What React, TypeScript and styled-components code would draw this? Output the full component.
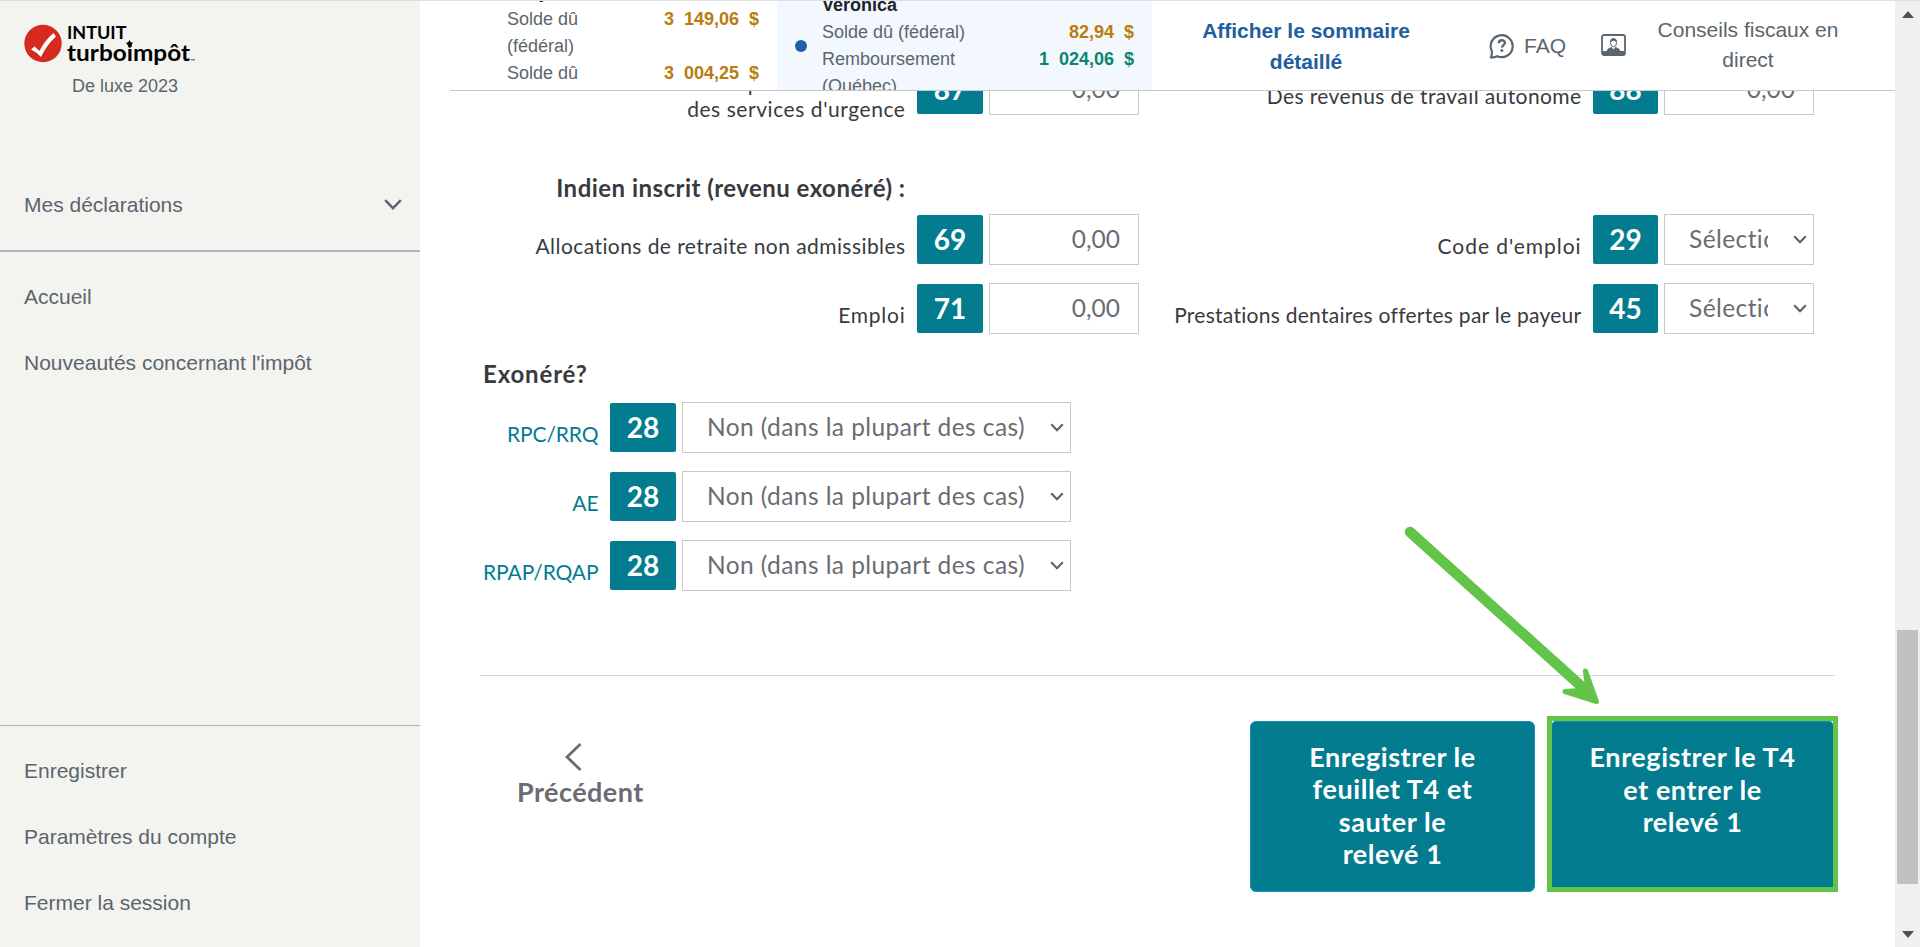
import styled, { createGlobalStyle } from "styled-components";

const avenir = `Lato, "Liberation Sans", sans-serif`;
const arial = `"Liberation Sans", Arial, sans-serif`;

const App = () => {
  return (
    <Page>
      <GlobalStyle />
      <Sidebar>
        <Brand>
          <Logo />
          <Edition>De luxe 2023</Edition>
        </Brand>
        <ReturnsToggle>
          <span>Mes déclarations</span>
          <Chevron width={18} height={11} stroke={2.4} />
        </ReturnsToggle>
        <NavList>
          <NavItem>Accueil</NavItem>
          <NavItem>Nouveautés concernant l'impôt</NavItem>
        </NavList>
        <BottomNav>
          <NavItem>Enregistrer</NavItem>
          <NavItem>Paramètres du compte</NavItem>
          <NavItem>Fermer la session</NavItem>
        </BottomNav>
      </Sidebar>
      <Main>
        <Header>
          <PersonCard>
            <PersonInfo>
              <PersonName>Tony</PersonName>
              <span>Solde dû</span>
              <span>(fédéral)</span>
              <span>Solde dû</span>
            </PersonInfo>
            <Amounts>
              <Amount>{"3\u00a0\u00a0149,06\u00a0\u00a0$"}</Amount>
              <Amount />
              <Amount>{"3\u00a0\u00a0004,25\u00a0\u00a0$"}</Amount>
            </Amounts>
          </PersonCard>
          <ActivePersonCard>
            <Dot />
            <PersonInfo>
              <PersonName>Veronica</PersonName>
              <span>Solde dû (fédéral)</span>
              <span>Remboursement</span>
              <span>(Québec)</span>
            </PersonInfo>
            <Amounts>
              <Amount>{"82,94\u00a0\u00a0$"}</Amount>
              <Amount $refund>{"1\u00a0\u00a0024,06\u00a0\u00a0$"}</Amount>
            </Amounts>
          </ActivePersonCard>
          <SummaryLink>Afficher le sommaire détaillé</SummaryLink>
          <FaqLink>
            <FaqIcon />
            <span>FAQ</span>
          </FaqLink>
          <ExpertLink>
            <ExpertIcon />
            <span>Conseils fiscaux en direct</span>
          </ExpertLink>
        </Header>
        <Content>
          <FormGrid>
            <Field label={"Somme pour volontaires\ndes services d'urgence"} box="87" spacing={0.56} />
            <Field label="Des revenus de travail autonome" box="88" spacing={0.4} />
          </FormGrid>
          <SectionTitle>Indien inscrit (revenu exonéré) :</SectionTitle>
          <FormGrid>
            <Field label="Allocations de retraite non admissibles" box="69" spacing={0.43} />
            <Field label="Code d'emploi" box="29" select spacing={0.95} />
            <Field label="Emploi" box="71" spacing={0.75} />
            <Field label="Prestations dentaires offertes par le payeur" box="45" select spacing={0.27} />
          </FormGrid>
          <ExemptTitle>Exonéré?</ExemptTitle>
          <ExemptList>
            {["RPC/RRQ", "AE", "RPAP/RQAP"].map((label) => (
              <FieldRow key={label}>
                <LinkLabel $spacing={-0.1}>{label}</LinkLabel>
                <BoxNumber>28</BoxNumber>
                <SelectBox $width={389}>
                  <SelectText>Non (dans la plupart des cas)</SelectText>
                  <Chevron width={14} height={9} stroke={2.2} />
                </SelectBox>
              </FieldRow>
            ))}
          </ExemptList>
          <Actions>
            <BackButton>
              <BackIcon />
              Précédent
            </BackButton>
            <ActionButtons>
              <SaveButton>
                Enregistrer le
                <br />
                feuillet T4 et
                <br />
                sauter le
                <br />
                relevé 1
              </SaveButton>
              <Highlight>
                <SaveButton>
                  Enregistrer le T4
                  <br />
                  et entrer le
                  <br />
                  relevé 1
                </SaveButton>
              </Highlight>
            </ActionButtons>
          </Actions>
        </Content>
      </Main>
      <ScrollTrack>
        <ScrollArrow viewBox="0 0 12 7">
          <path d="M6 0 12 7H0Z" fill="#505050" />
        </ScrollArrow>
        <ScrollThumb />
        <ScrollArrow viewBox="0 0 12 7">
          <path d="M0 0H12L6 7Z" fill="#505050" />
        </ScrollArrow>
      </ScrollTrack>
      <PointerArrow viewBox="0 0 200 190">
        <path d="M9 10 180 164" stroke="#62c448" strokeWidth="10.500" strokeLinecap="round" />
        <path
          d="M184.500 149 195.500 179.500 164 169.500 178 168.500 186 162Z"
          fill="#62c448"
          stroke="#62c448"
          strokeWidth="5"
          strokeLinejoin="round"
        />
      </PointerArrow>
    </Page>
  );
};

export default App;

type FieldProps = {
  label: string;
  box: string;
  select?: boolean;
  spacing: number;
};

const Field = ({ label, box, select, spacing }: FieldProps) => (
  <FieldRow>
    <Label $spacing={spacing}>{label}</Label>
    <BoxNumber>{box}</BoxNumber>
    {select ? (
      <SelectBox $width={150}>
        <SelectText $clip>Sélectionnez</SelectText>
        <Chevron width={14} height={9} stroke={2.2} />
      </SelectBox>
    ) : (
      <AmountInput defaultValue="0,00" />
    )}
  </FieldRow>
);

const Chevron = ({ width, height, stroke }: { width: number; height: number; stroke: number }) => (
  <svg width={width} height={height} viewBox={`0 0 ${width} ${height}`} fill="none">
    <path
      d={`M1.200 1.200 ${width / 2} ${height - 1.8} ${width - 1.2} 1.200`}
      stroke="#5b656d"
      strokeWidth={stroke}
    />
  </svg>
);

const BackIcon = () => (
  <svg width="17" height="28" viewBox="0 0 17 28" fill="none">
    <path d="M15.500 1 2 14 15.500 27" stroke="#6b6c72" strokeWidth="2.800" />
  </svg>
);

const FaqIcon = () => (
  <svg width="26" height="26" viewBox="0 0 26 26" fill="none" stroke="#5b656d">
    <path
      d="M1.800 24.400Q3.200 22.500 2.800 18A11 11 0 1 1 8.200 23.200Q5 24.800 1.800 24.400Z"
      strokeWidth="2.200"
      strokeLinejoin="round"
    />
    <path d="M9.800 10.200C9.800 6.200 16.200 6.400 15.900 9.900 15.700 12 13 12.200 12.900 14.600" strokeWidth="2.300" />
    <circle cx="12.900" cy="17.600" r="1.500" fill="#5b656d" stroke="none" />
  </svg>
);

const ExpertIcon = () => (
  <svg width="25" height="22" viewBox="0 0 25 22" fill="none">
    <rect x="1" y="1" width="23" height="20" rx="2" stroke="#5b656d" strokeWidth="1.800" />
    <path d="M2 17H5.500Q6.500 14 10.500 13L12.500 15.500 14.500 13Q18.500 14 19.500 17H23V20.500H2Z" fill="#5b656d" />
    <ellipse cx="12.500" cy="8.800" rx="3" ry="4" fill="#fff" stroke="#5b656d" strokeWidth="1" />
    <path d="M9.200 8Q9 4.300 12.500 4.300T15.800 8Q13.500 7.600 12.500 6.600 11 7.800 9.200 8Z" fill="#5b656d" />
  </svg>
);

const Logo = () => (
  <svg width="176" height="44" viewBox="0 0 176 44">
    <circle cx="19" cy="19.500" r="18.700" fill="#d52b1e" />
    <path d="M7 25.500 10.500 22.500 15.500 27Q20.500 16.500 29.500 9L32 12.500Q22.500 21 17 33Q12.500 28 7 25.500Z" fill="#fff" />
    <LogoText x="43" y="14.800" fontSize="16.500" textLength="59.500" lengthAdjust="spacingAndGlyphs">
      INTUIT
    </LogoText>
    <LogoText x="43" y="37.200" fontSize="23" textLength="123" lengthAdjust="spacingAndGlyphs">
      turboimpôt
    </LogoText>
    <path d="M105.500 16 107 18.500H109L107.500 21H106.200V23.500H104.800V21H103.500L102 18.500H104Z" fill="#000" />
    <path d="M167 35.800H171" stroke="#555" strokeWidth="1" />
  </svg>
);

const GlobalStyle = createGlobalStyle`
  * {
    box-sizing: border-box;
  }
  body {
    margin: 0;
    background: #fff;
    overflow: hidden;
  }
`;

const Page = styled.div`
  position: relative;
  display: grid;
  grid-template-columns: 420px 1fr 25px;
  width: 1920px;
  height: 947px;
  border-top: 1px solid #dedfe0;
  overflow: hidden;
  font-family: ${arial};
`;

const Sidebar = styled.aside`
  display: flex;
  flex-direction: column;
  background: #f3f4ef;
  color: #5b656d;
  font-size: 21px;
`;

const Brand = styled.div`
  display: flex;
  flex-direction: column;
  height: 158px;
  padding: 23px 0 0 24px;
`;

const LogoText = styled.text`
  font-family: ${avenir};
  font-weight: 700;
`;

const Edition = styled.div`
  padding: 7px 0 0 48px;
  font-size: 18px;
  line-height: 22px;
`;

const ReturnsToggle = styled.div`
  display: flex;
  align-items: center;
  justify-content: space-between;
  height: 93px;
  padding: 0 18px 0 24px;
  border-bottom: 2px solid #a9b7bf;
`;

const NavList = styled.nav`
  display: flex;
  flex-direction: column;
  gap: 42px;
  padding: 33px 24px 0;
`;

const NavItem = styled.a`
  line-height: 24px;
`;

const BottomNav = styled(NavList)`
  height: 222px;
  margin-top: auto;
  border-top: 1px solid #a9b7bf;
`;

const Main = styled.main`
  display: flex;
  flex-direction: column;
  min-width: 0;
  overflow: hidden;
`;

const Header = styled.header`
  display: flex;
  flex: none;
  height: 90px;
  margin-left: 30px;
  border-bottom: 1px solid #c1c9cc;
  background: #fff;
  color: #5b656d;
  font-size: 21px;
  line-height: 30px;
  overflow: hidden;
`;

const PersonCard = styled.div`
  display: flex;
  justify-content: space-between;
  flex: none;
  width: 327px;
  padding: 0 18px 0 57px;
  font-size: 18px;
  line-height: 27px;
`;

const ActivePersonCard = styled(PersonCard)`
  width: 375px;
  padding: 13px 18px 0 18px;
  background: #f3f8fe;
`;

const PersonInfo = styled.div`
  display: flex;
  flex-direction: column;
  flex: 1;
  margin-top: -22px;
  white-space: nowrap;

  ${ActivePersonCard} & {
    margin-left: 15px;
  }
`;

const PersonName = styled.strong`
  color: #1d232b;
`;

const Dot = styled.div`
  width: 12px;
  height: 12px;
  margin-top: 26px;
  border-radius: 50%;
  background: #205ea6;
`;

const Amounts = styled.div`
  display: flex;
  flex-direction: column;
  align-items: flex-end;
  margin-top: 5px;
`;

const Amount = styled.strong<{ $refund?: boolean }>`
  height: 27px;
  color: ${({ $refund }) => ($refund ? "#0b8570" : "#ba7c0c")};
`;

const SummaryLink = styled.a`
  width: 220px;
  margin: 14px 0 0 44px;
  color: #205ea0;
  font-weight: bold;
  line-height: 31px;
  text-align: center;
`;

const FaqLink = styled.a`
  display: flex;
  align-items: center;
  gap: 9px;
  margin-left: 73px;
`;

const ExpertLink = styled.a`
  display: flex;
  align-items: center;
  margin-left: 35px;
  padding-bottom: 1px;

  span {
    width: 200px;
    margin-left: 22px;
    text-align: center;
  }
`;

const Content = styled.section`
  display: flex;
  flex-direction: column;
  flex: 1;
  min-height: 0;
  padding: 0 60px 0 30px;
  overflow: hidden;
  color: #393a3d;
  font-family: ${avenir};

  /* first row sits partly scrolled under the header */
  > :first-child {
    margin-top: -27px;
  }
`;

const FieldRow = styled.div`
  display: flex;
  align-items: center;
  justify-content: flex-end;
  gap: 6px;
  height: 51px;
`;

const Label = styled.label<{ $spacing?: number }>`
  padding: 13px 5.5px 0 0;
  font-size: 21px;
  line-height: 26px;
  letter-spacing: ${({ $spacing = 0 }) => $spacing}px;
  text-align: right;
  white-space: pre;
`;

const LinkLabel = styled(Label)`
  color: #037c8f;
`;

const BoxNumber = styled.div`
  display: flex;
  align-items: center;
  justify-content: center;
  flex: none;
  width: 66px;
  height: 49px;
  padding-bottom: 2px;
  border-radius: 2px;
  background: #037c8f;
  color: #fff;
  font-size: 28px;
  font-weight: 700;
`;

const FormGrid = styled.div`
  display: grid;
  grid-template-columns: 689px 675px;
  row-gap: 18px;

  > :nth-child(even) ${BoxNumber} {
    width: 65px;
  }
`;

const AmountInput = styled.input`
  width: 150px;
  height: 51px;
  padding: 0 18px 2px;
  border: 1px solid #c7c8ca;
  background: #fff;
  color: #6b6c72;
  font-family: ${avenir};
  font-size: 24.5px;
  text-align: right;
`;

const SelectBox = styled.div<{ $width: number }>`
  display: flex;
  align-items: center;
  justify-content: space-between;
  flex: none;
  width: ${({ $width }) => $width}px;
  height: 51px;
  padding: 0 6px 0 24px;
  border: 1px solid #c7c8ca;
  color: #6b6c72;
  font-size: 24.5px;
  letter-spacing: 0.42px;
`;

const SelectText = styled.span<{ $clip?: boolean }>`
  width: ${({ $clip }) => ($clip ? "79px" : "auto")};
  padding-bottom: 2px;
  line-height: 36px;
  white-space: nowrap;
  overflow: hidden;
`;

const SectionTitle = styled.h3`
  width: 455.5px;
  height: 99px;
  margin: 0;
  padding-top: 58px;
  font-size: 24px;
  font-weight: 700;
  letter-spacing: 0.47px;
  line-height: 30px;
  text-align: right;
  white-space: nowrap;
`;

const ExemptTitle = styled.h3`
  height: 68px;
  margin: 0;
  padding: 25px 0 0 33px;
  font-size: 24px;
  font-weight: 700;
  letter-spacing: 0.85px;
  line-height: 30px;
`;

const ExemptList = styled.div`
  display: flex;
  flex-direction: column;
  gap: 18px;
  width: 621px;
`;

const Actions = styled.div`
  display: flex;
  justify-content: space-between;
  width: 1355px;
  margin: 84px 0 0 30px;
  border-top: 1px solid #d4d7d8;
`;

const BackButton = styled.button`
  display: flex;
  flex-direction: column;
  align-items: center;
  align-self: flex-start;
  gap: 4px;
  margin: 67px 0 0 37px;
  padding: 0;
  border: 0;
  background: none;
  color: #6b6c72;
  font-family: ${avenir};
  font-size: 27px;
  font-weight: 700;
  letter-spacing: 0.45px;
  line-height: 34px;

  svg {
    margin-right: 14px;
  }
`;

const ActionButtons = styled.div`
  display: flex;
  align-items: flex-end;
  gap: 12px;
  margin: 40px -3px 0 0;
`;

const SaveButton = styled.button`
  display: block;
  width: 285px;
  height: 171px;
  padding: 0 0 2px;
  border: 1px solid #1490b4;
  border-radius: 6px;
  background: #037c8f;
  color: #fff;
  font-family: ${avenir};
  font-size: 27px;
  font-weight: 700;
  letter-spacing: 0.55px;
  line-height: 32.4px;
`;

const Highlight = styled.div`
  width: 291px;
  border: 5px solid #62c448;

  ${SaveButton} {
    width: 281px;
    height: 166px;
    padding-bottom: 29px;
    border-width: 1px 0 0;
    border-radius: 4px 4px 0 0;
  }
`;

const ScrollTrack = styled.div`
  display: flex;
  flex-direction: column;
  align-items: center;
  padding: 10px 0 9px;
  background: #f0f0f0;
`;

const ScrollArrow = styled.svg`
  flex: none;
  width: 12px;
  height: 7px;
`;

const ScrollThumb = styled.div`
  width: 21px;
  height: 254px;
  margin: 612px 0 auto;
  background: #c1c1c1;
`;

const PointerArrow = styled.svg`
  position: absolute;
  top: 521px;
  left: 1401px;
  width: 200px;
  height: 190px;
  fill: none;
  pointer-events: none;
`;
